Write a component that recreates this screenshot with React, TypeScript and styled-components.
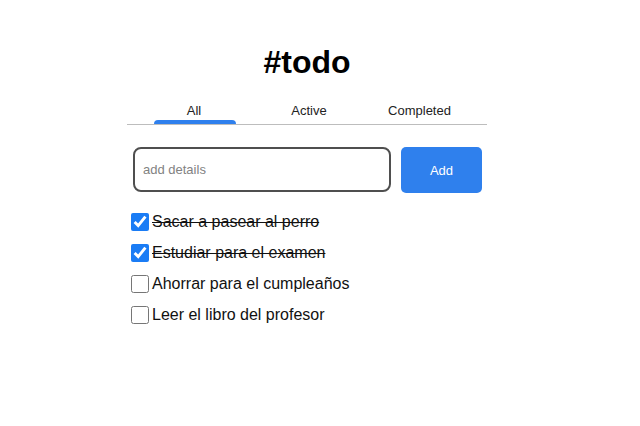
import React, { useState } from "react";
import styled, { createGlobalStyle } from "styled-components";

const FONT = `"Liberation Sans Narrow", "Arial Narrow", "Liberation Sans", Arial, sans-serif`;

const Global = createGlobalStyle`
  html, body { margin: 0; padding: 0; background: #ffffff; }
  body { font-family: ${FONT}; color: #111; }
  * { box-sizing: border-box; }
`;

const Page = styled.div`
  display: flex;
  justify-content: center;
  padding: 41px 26px 0 0;
`;

const Main = styled.main`
  width: 360px;
  display: flex;
  flex-direction: column;
`;

const Title = styled.h1`
  margin: 0;
  font-size: 32px;
  line-height: 42px;
  font-weight: 700;
  text-align: center;
  color: #000;
`;

const Tabs = styled.nav`
  margin-top: 18px;
  display: grid;
  grid-template-columns: 134px 96px 125px 1fr;
  border-bottom: 1px solid #bdbdbd;
`;

const Tab = styled.button<{ $active?: boolean }>`
  position: relative;
  border: 0;
  background: none;
  padding: 0 0 3px;
  font-family: ${FONT};
  font-size: 13px;
  line-height: 20px;
  color: #222;
  text-align: center;
  cursor: pointer;
  &::after {
    content: "";
    display: ${(p) => (p.$active ? "block" : "none")};
    position: absolute;
    left: 50%;
    bottom: 0;
    width: 82px;
    height: 4px;
    margin-left: -40px;
    background: #2f80ed;
    border-radius: 4px 4px 0 0;
  }
`;

const Form = styled.form`
  margin-top: 22px;
  display: flex;
  align-items: flex-start;
  gap: 10px;
  padding: 0 5px 0 6px;
`;

const Input = styled.input`
  flex: 1;
  min-width: 0;
  height: 45px;
  border: 2px solid #4f4f4f;
  border-radius: 8px;
  padding: 0 8px;
  font-family: ${FONT};
  font-size: 13px;
  color: #333;
  outline: none;
  &::placeholder { color: #828282; }
`;

const AddButton = styled.button`
  width: 81px;
  height: 46px;
  border: 0;
  border-radius: 5px;
  background: #2f80ed;
  color: #fff;
  font-family: ${FONT};
  font-size: 13px;
  cursor: pointer;
`;

const List = styled.ul`
  list-style: none;
  margin: 13px 0 0;
  padding: 0;
`;

const Row = styled.li`
  display: flex;
  align-items: center;
  height: 31px;
`;

const Check = styled.input`
  width: 18px;
  height: 18px;
  margin: 0 3px 0 4px;
  accent-color: #1a7cf5;
`;

const Label = styled.span<{ $done?: boolean }>`
  font-size: 16px;
  color: #111;
  text-decoration: ${(p) => (p.$done ? "line-through" : "none")};
`;

const initial = [
  { text: "Sacar a pasear al perro", done: true },
  { text: "Estudiar para el examen", done: true },
  { text: "Ahorrar para el cumpleaños", done: false },
  { text: "Leer el libro del profesor", done: false },
];

export default function App() {
  const [todos, setTodos] = useState(initial);
  return (
    <>
      <Global />
      <Page>
        <Main>
          <Title>#todo</Title>
          <Tabs>
            <Tab $active>All</Tab>
            <Tab>Active</Tab>
            <Tab>Completed</Tab>
          </Tabs>
          <Form onSubmit={(e) => e.preventDefault()}>
            <Input placeholder="add details" />
            <AddButton type="submit">Add</AddButton>
          </Form>
          <List>
            {todos.map((t, i) => (
              <Row key={t.text}>
                <Check
                  type="checkbox"
                  checked={t.done}
                  onChange={() =>
                    setTodos((ts) => ts.map((x, j) => (j === i ? { ...x, done: !x.done } : x)))
                  }
                />
                <Label $done={t.done}>{t.text}</Label>
              </Row>
            ))}
          </List>
        </Main>
      </Page>
    </>
  );
}
